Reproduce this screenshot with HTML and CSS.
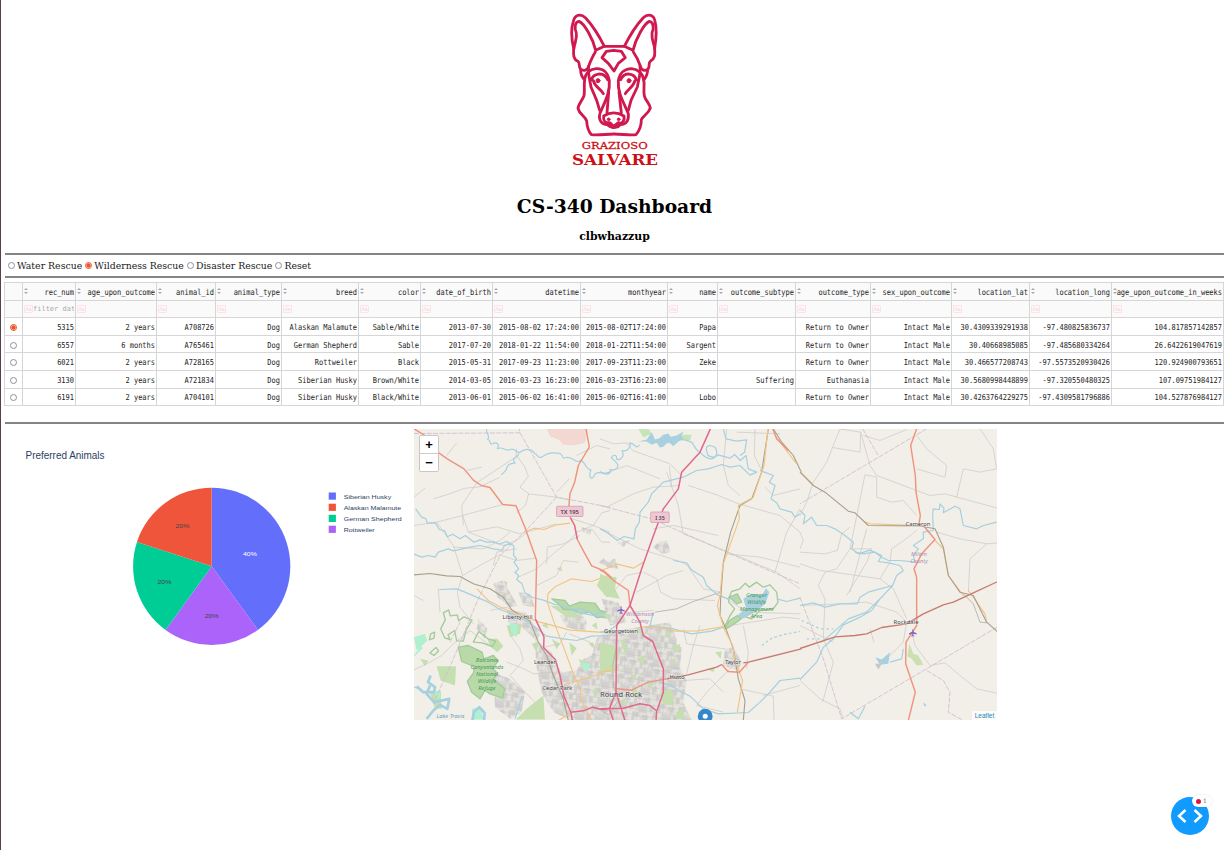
FILE: index.html
```html
<!DOCTYPE html>
<html lang="en">
<head>
<meta charset="utf-8">
<title>CS-340 Dashboard</title>
<link rel="stylesheet" href="styles.css">
</head>
<body>
<main class="page">
  <header class="head">
    <svg class="logo" viewBox="0 0 360 525" role="img" aria-label="Grazioso Salvare">
      <g class="dog">
        <path d="M121 156 C112 170 108 180 101 198 C98 211 86 215 77 207 C69 197 76 189 69 184 C52 176 56 158 56 145 C50 120 47 88 55 64 C59 45 76 39 92 54 C114 78 132 107 148 139 L208 139 C224 107 242 78 264 54 C280 39 297 45 300 64 C307 90 303 120 299 145 C299 158 303 175 286 184 C279 189 286 199 279 207 C270 215 259 211 256 198 C250 180 245 170 235 156"/>
        <path d="M64 99 C57 84 60 65 72 64 C88 70 114 116 122 151 L148 139 M291 99 C298 84 295 65 283 64 C268 70 242 116 234 151 L208 139 M64 99 C67 118 58 130 57 145 M291 99 C289 118 297 130 299 145"/>
        <path d="M141 173 L154 154 L176 151 L199 154 L211 173 L190 190 L177 213 L160 190 Z"/>
        <path d="M77 210 C77 227 82 233 89 239 C86 260 90 272 87 287 C82 301 70 312 69 325 C73 343 89 347 95 363 C96 382 101 395 109 404 C131 407 153 402 177 402 C202 402 222 407 243 404 C254 391 259 379 259 359 C267 344 280 342 286 324 C284 309 270 300 268 287 C264 270 270 253 266 240 C274 232 277 224 278 210"/>
        <path d="M89 239 C91 219 106 207 124 206 C147 205 160 221 163 243 C166 279 147 310 135 340 C129 359 140 375 158 374 C164 385 190 385 195 374 C214 375 222 361 220 341 C208 311 187 279 190 243 C193 221 207 206 230 206 C249 208 265 221 266 240"/>
        <path d="M101 199 C98 223 105 241 108 261 L125 301 L134 331 M255 199 C258 223 250 241 247 261 L228 301 L220 331 M109 240 C114 220 146 213 158 239 M244 240 C239 220 208 213 197 239 M115 242 C120 262 137 266 145 281 M240 242 C235 262 219 266 211 281 M161 276 L156 339 M192 276 L199 339"/>
        <path d="M146 348 Q176 329 207 348 C210 366 199 372 190 368 L176 379 L164 368 C150 370 144 362 146 348Z"/>
        <path d="M166 374 Q176 391 188 374"/>
        <circle class="dot" cx="129" cy="242" r="6"/><circle class="dot" cx="222" cy="242" r="6"/>
        <circle class="dot" cx="161" cy="358" r="4"/><circle class="dot" cx="191" cy="358" r="4"/>
      </g>
      <text class="brand thin" x="80" y="446" font-size="27" textLength="198" lengthAdjust="spacingAndGlyphs">GRAZIOSO</text>
      <text class="brand bold" x="51" y="495" font-size="42" textLength="258" lengthAdjust="spacingAndGlyphs">SALVARE</text>
    </svg>
    <h1>CS-340 Dashboard</h1>
    <h2>clbwhazzup</h2>
  </header>
  <hr class="rule">
  <div class="filters">
    <label><i class="radio"></i>Water Rescue</label>
    <label><i class="radio on"></i>Wilderness Rescue</label>
    <label><i class="radio"></i>Disaster Rescue</label>
    <label><i class="radio"></i>Reset</label>
  </div>
  <hr class="rule">
  <table class="grid">
    <colgroup><col style="width:18px"><col style="width:53px"><col style="width:81px"><col style="width:59px"><col style="width:66px"><col style="width:77px"><col style="width:62px"><col style="width:72px"><col style="width:88px"><col style="width:87px"><col style="width:50px"><col style="width:78px"><col style="width:75px"><col style="width:81px"><col style="width:78px"><col style="width:82px"><col style="width:112px"></colgroup>
    <thead>
      <tr><th></th><th><span>rec_num</span></th><th><span>age_upon_outcome</span></th><th><span>animal_id</span></th><th><span>animal_type</span></th><th><span>breed</span></th><th><span>color</span></th><th><span>date_of_birth</span></th><th><span>datetime</span></th><th><span>monthyear</span></th><th><span>name</span></th><th><span>outcome_subtype</span></th><th><span>outcome_type</span></th><th><span>sex_upon_outcome</span></th><th><span>location_lat</span></th><th><span>location_long</span></th><th><span>age_upon_outcome_in_weeks</span></th></tr>
      <tr class="filter"><td></td><td><div class="f"><b>Aa</b><em>filter data</em></div></td><td><div class="f"><b>Aa</b></div></td><td><div class="f"><b>Aa</b></div></td><td><div class="f"><b>Aa</b></div></td><td><div class="f"><b>Aa</b></div></td><td><div class="f"><b>Aa</b></div></td><td><div class="f"><b>Aa</b></div></td><td><div class="f"><b>Aa</b></div></td><td><div class="f"><b>Aa</b></div></td><td><div class="f"><b>Aa</b></div></td><td><div class="f"><b>Aa</b></div></td><td><div class="f"><b>Aa</b></div></td><td><div class="f"><b>Aa</b></div></td><td><div class="f"><b>Aa</b></div></td><td><div class="f"><b>Aa</b></div></td><td><div class="f"><b>Aa</b></div></td></tr>
    </thead>
    <tbody>
      <tr><td><i class="radio on"></i></td><td><span>5315</span></td><td><span>2 years</span></td><td><span>A708726</span></td><td><span>Dog</span></td><td><span>Alaskan Malamute</span></td><td><span>Sable/White</span></td><td><span>2013-07-30</span></td><td><span>2015-08-02 17:24:00</span></td><td><span>2015-08-02T17:24:00</span></td><td><span>Papa</span></td><td></td><td><span>Return to Owner</span></td><td><span>Intact Male</span></td><td><span>30.4309339291938</span></td><td><span>-97.480825836737</span></td><td><span>104.817857142857</span></td></tr>
      <tr><td><i class="radio"></i></td><td><span>6557</span></td><td><span>6 months</span></td><td><span>A765461</span></td><td><span>Dog</span></td><td><span>German Shepherd</span></td><td><span>Sable</span></td><td><span>2017-07-20</span></td><td><span>2018-01-22 11:54:00</span></td><td><span>2018-01-22T11:54:00</span></td><td><span>Sargent</span></td><td></td><td><span>Return to Owner</span></td><td><span>Intact Male</span></td><td><span>30.40668985085</span></td><td><span>-97.485680334264</span></td><td><span>26.6422619047619</span></td></tr>
      <tr><td><i class="radio"></i></td><td><span>6021</span></td><td><span>2 years</span></td><td><span>A728165</span></td><td><span>Dog</span></td><td><span>Rottweiler</span></td><td><span>Black</span></td><td><span>2015-05-31</span></td><td><span>2017-09-23 11:23:00</span></td><td><span>2017-09-23T11:23:00</span></td><td><span>Zeke</span></td><td></td><td><span>Return to Owner</span></td><td><span>Intact Male</span></td><td><span>30.466577208743</span></td><td><span>-97.5573520930426</span></td><td><span>120.924900793651</span></td></tr>
      <tr><td><i class="radio"></i></td><td><span>3130</span></td><td><span>2 years</span></td><td><span>A721834</span></td><td><span>Dog</span></td><td><span>Siberian Husky</span></td><td><span>Brown/White</span></td><td><span>2014-03-05</span></td><td><span>2016-03-23 16:23:00</span></td><td><span>2016-03-23T16:23:00</span></td><td></td><td><span>Suffering</span></td><td><span>Euthanasia</span></td><td><span>Intact Male</span></td><td><span>30.5680998448899</span></td><td><span>-97.320550480325</span></td><td><span>107.09751984127</span></td></tr>
      <tr><td><i class="radio"></i></td><td><span>6191</span></td><td><span>2 years</span></td><td><span>A704101</span></td><td><span>Dog</span></td><td><span>Siberian Husky</span></td><td><span>Black/White</span></td><td><span>2013-06-01</span></td><td><span>2015-06-02 16:41:00</span></td><td><span>2015-06-02T16:41:00</span></td><td><span>Lobo</span></td><td></td><td><span>Return to Owner</span></td><td><span>Intact Male</span></td><td><span>30.4263764229275</span></td><td><span>-97.4309581796886</span></td><td><span>104.527876984127</span></td></tr>
    </tbody>
  </table>
  <hr class="rule last">
  <section class="visuals">
    <svg class="chart" viewBox="5 428 409 292">
      <text class="title" x="25.5" y="457.5" textLength="79" lengthAdjust="spacingAndGlyphs">Preferred Animals</text>
      <path fill="#636efa" d="M211.7 565.3V486.7A78.6 78.6 0 0 1 257.9 628.9Z"/>
      <path fill="#ab63fa" d="M211.7 565.3L257.9 628.9A78.6 78.6 0 0 1 165.5 628.9Z"/>
      <path fill="#00cc96" d="M211.7 565.3L165.5 628.9A78.6 78.6 0 0 1 136.95 541Z"/>
      <path fill="#ef553b" d="M211.7 565.3L136.95 541A78.6 78.6 0 0 1 211.7 486.7Z"/>
      <g class="pct"><text x="250" y="555.3">40%</text><text x="182.5" y="527.3">20%</text><text x="164.5" y="583.3">20%</text><text x="211.7" y="617.3">20%</text></g>
      <rect x="328.7" y="491.5" width="7.2" height="7.2" fill="#636efa"/><rect x="328.7" y="502.7" width="7.2" height="7.2" fill="#ef553b"/><rect x="328.7" y="513.8" width="7.2" height="7.2" fill="#00cc96"/><rect x="328.7" y="524.7" width="7.2" height="7.2" fill="#ab63fa"/>
      <g class="legend"><text x="343.7" y="497.8" textLength="47.5" lengthAdjust="spacingAndGlyphs">Siberian Husky</text><text x="343.7" y="509" textLength="57.5" lengthAdjust="spacingAndGlyphs">Alaskan Malamute</text><text x="343.7" y="520.2" textLength="58" lengthAdjust="spacingAndGlyphs">German Shepherd</text><text x="343.7" y="531" textLength="31" lengthAdjust="spacingAndGlyphs">Rottweiler</text></g>
    </svg>
    <div class="map">
      <svg class="tiles" viewBox="414 428.5 583 291">
        <defs>
          <pattern id="streets" width="61" height="53" patternUnits="userSpaceOnUse" patternTransform="rotate(9)"><rect width="61" height="53" fill="#e6e3df"/><path d="M0 0H22V14H9V28H0ZM28 6H49V23H33ZM14 31H40V53H18ZM46 30H61V46H50Z" fill="#d3d1d0"/><path d="M38 26H46V34H38ZM2 40H10V50H2Z" fill="#d9e8c8"/><path d="M0 9L25 12L61 9M12 0L16 25L12 53M0 29L33 27L61 29M43 0L40 28L43 53M0 45L61 45M27 12V27M54 29V53" stroke="#c2c0c1" stroke-width="1.500" fill="none"/></pattern>
          <pattern id="hatch" width="7" height="7" patternUnits="userSpaceOnUse" patternTransform="rotate(45)"><rect width="7" height="7" fill="#f3dcd5"/><path d="M0 0V7" stroke="#f2c3bb" stroke-width="2"/></pattern>
        </defs>
        <!-- western third -->
        <g transform="translate(410 425) scale(.33333)">
          <path fill="url(#hatch)" stroke="#f3bdb5" d="M412 10L422 32L448 42L460 56L492 58L524 50L532 10Z"/>
          <g fill="url(#streets)">
            <path d="M376 640L402 665L425 680L440 720L455 740L500 735L520 700L545 690L560 640L585 620L780 590L800 640L790 885H484L430 860L395 800L378 720Z"/>
            <path d="M250 475L278 465L300 500L322 540L300 545L262 515ZM290 555L345 560L390 625L380 645L330 600L295 590ZM205 580L232 610L225 640L200 610ZM248 740L300 760L345 800L335 860L300 880L255 845ZM325 500L360 505L375 545L340 540ZM450 570L510 555L530 590L525 620L470 605ZM565 410L582 398L592 415L610 400L612 420L580 420ZM515 305L545 312L540 328L516 318Z"/>
          </g>
          <g fill="#c5dfb0">
            <path d="M80 722L138 722L135 780L92 765ZM30 700L55 705L45 722ZM350 850L400 810L405 882H318ZM575 450L620 455L612 510L590 515L560 480ZM440 430L454 424L456 438ZM420 540L480 545L515 575L470 575ZM290 600L335 595L330 625L300 635ZM478 650L500 668L485 690ZM572 675L600 660L630 680L612 745L580 730ZM60 800L92 795L95 850L75 850ZM505 700L530 710L520 730ZM280 465L292 470L290 485ZM365 655L385 650L380 680ZM395 600L410 590L415 610ZM425 640L450 655L440 672ZM545 600L560 590L562 612ZM545 800L560 790L565 810ZM535 655L550 650L552 670ZM232 640L262 640L280 662L262 680L240 662Z"/>
          </g>
          <path fill="#aef0d0" d="M12 635L44 625L52 645L20 675ZM12 690L34 660L38 668L14 692ZM298 590L325 600L320 635L304 620ZM515 710L542 715L532 738L518 730ZM70 800L92 796L88 822ZM185 850L214 848L220 882H190Z"/>
          <g class="reserve">
            <path class="filled" d="M145 665L175 660L216 680L222 700L250 690L265 706L248 728L262 744L250 762L284 790L278 818L240 805L225 795L210 820L185 800L172 768L192 740L190 722L155 708Z"/>
            <path d="M100 562L116 553L121 571L142 568L146 586L162 574L186 584L168 615L160 647L140 646L134 615L114 628L120 642L104 637L92 610L106 583ZM206 618L234 640L257 647L247 663L216 652L190 650ZM62 625L74 620L72 638L58 643ZM60 682L78 666L86 676L72 690Z"/>
            <path class="filled" d="M425 520L465 525L478 542L510 530L555 533L570 555L592 560L596 574L560 576L540 560L515 565L490 552L462 552L445 535Z"/>
          </g>
          <g class="minor">
            <path d="M12 300L80 290L158 270L275 238M70 220L110 208L165 188L210 184L270 155M160 300L155 240L200 172L318 94L320 70M320 90L345 125L355 152L330 185L356 205L346 240L320 262M158 270L175 320L260 304L330 325L440 295M80 290L130 360L158 450L142 500L150 545L190 595M130 365L220 370L270 345L300 320M175 320L280 360L320 345L350 322M158 450L210 420L268 388L320 405L378 398M325 455L380 430L435 380L480 345L500 320L550 300L600 320M355 205L440 215L480 225M500 90L560 60L600 70M440 200L478 160M480 278L550 300L575 262L600 255M110 90L140 52M170 135L215 125M12 215L45 188M12 510L40 525M12 733L60 710L95 690L130 655L180 615L240 660M240 555L288 545L318 560L360 580M305 635L330 670L340 705L300 750L345 800L375 830M85 490L90 560M290 710L330 725L372 745L430 740M402 665L450 655L470 620M545 310L575 350L600 350M380 480L440 450L460 405L505 410M410 415L412 365L460 355L510 330M478 625L540 650L590 690M250 420L260 380L320 370M480 810L500 805L500 850L550 852L590 880"/>
          </g>
          <g class="border"><path d="M12 24L330 22L328 10M330 22L440 215L600 245M440 215L345 318L270 390L205 520L130 700L70 835M120 650L150 590"/></g>
          <g class="water">
            <path d="M230 10C226 25 242 28 233 42C245 43 235 60 250 54C260 48 270 58 262 70C280 60 285 80 300 72C318 65 315 85 330 80C350 65 368 73 374 84C385 87 381 100 396 95C412 81 430 80 450 84C460 89 455 103 468 96C490 92 500 118 512 104C525 108 530 135 543 133C534 156 545 170 556 144C572 135 585 150 604 138"/>
            <path d="M327 84C320 102 302 95 315 113C300 113 290 120 289 133L274 148M17 250L35 275L48 280L52 293L76 292L88 312L104 316L112 334L128 326L150 340L166 330L192 350L210 343L230 350L252 349L268 356L290 348L311 361L311 390L320 400L312 410L326 430L315 441L326 450L320 462L336 475L345 502L368 516L400 524L430 535L470 545L500 560L590 578"/>
            <path d="M12 386L35 395L55 390L75 395L85 380L115 370L130 376L180 365L210 360L250 370L277 374L283 360L305 355M88 492L140 490L165 500L200 515L235 530L270 552L320 570L370 600L410 632L460 640L500 645L545 632L600 630"/>
            <path class="wide" d="M62 750L54 770L75 785L72 800L40 800L20 782M60 780L50 805L72 830L118 820L112 850L90 838L70 855L50 880M187 885L192 858L208 845L224 862L222 885"/>
            <path d="M336 815L325 850L315 880M12 785L30 790"/>
            <path d="M480 555L510 548L550 565L585 560"/>
          </g>
          <path class="rail" d="M12 448L60 444L110 451L150 453L190 475L240 490L280 515L305 553L360 587L385 650L410 690L430 750L460 820L475 885"/>
          <path class="sec" d="M201 490L236 526L275 547L335 571L390 590L480 614L600 622M347 318L372 308L402 312L440 298L480 293M600 448L545 468L485 460L438 482L414 504L412 530L432 590L455 650L492 750L512 790L512 820L545 885M462 778L540 755L600 735M445 885L485 862"/>
          <path class="prim" d="M12 10L45 30M78 76L112 100L162 130L190 164L214 180L240 186L278 237L318 241L345 306L380 405L376 580M528 10L538 64L505 120L494 170L480 205L476 250L482 280M502 342L525 385L545 421L580 435L604 456"/>
          <path class="trunk" d="M376 580L402 634L401 667L436 702L450 750L462 812L483 862L487 885M482 278L494 300L502 342M481 860L520 856L548 845L575 852L604 848"/>
        </g>
        <!-- centre third -->
        <g transform="translate(600 425) scale(.33333)">
          <path fill="url(#streets)" d="M160 645L200 650L245 665L240 725L260 765L250 830L275 884H160V800ZM175 350L200 345L212 378L190 388L160 365ZM375 670L400 665L425 710L415 735L368 720ZM52 350L90 345L70 365ZM10 402L30 410L45 398L55 430L20 425ZM5 520L55 530L80 590L30 600Z"/>
          <g fill="#c5dfb0"><path d="M0 650L42 660L40 700L15 745L0 738ZM195 615L215 625L205 640ZM180 800L215 790L222 840L190 835ZM218 660L240 656L238 678L220 675ZM60 640L84 660L76 690ZM110 700L135 690L130 720ZM0 445L30 460L60 520L30 515L0 490ZM320 730L345 725L340 740ZM95 800L110 790L110 820ZM345 680L365 678L362 700ZM108 610L128 608L125 630ZM90 750L110 745L105 765ZM60 825L76 820L78 845ZM210 700L225 700L222 720ZM140 780L155 772L158 792ZM228 860L250 850L255 880H230ZM10 570L30 565L28 585Z"/></g>
          <path fill="#c6e5b4" d="M115 10H145L155 24L130 36ZM240 28H275L270 45H245Z"/>
          <path fill="#a9d0df" d="M115 48L140 42L155 20L165 42L178 38L190 28L205 24L212 34L230 30L252 17L244 30L250 42L235 48L220 62L208 52L200 54L190 64L180 66L170 52L155 58L140 48Z"/>
          <g class="reserve"><path d="M386 518L395 498L420 490L436 473L448 485L470 470L490 485L510 478L530 500L534 530L520 550L480 555L455 580L425 570L410 585L374 604L390 570L404 550L386 530Z"/>
          <path class="filled" d="M374 610L388 585L412 570L424 580L402 596L382 608ZM388 515L412 505L425 530L410 535Z"/></g>
          <path fill="#a9d0df" d="M430 520L455 505L485 510L498 488L508 500L496 535L465 560L428 580L412 570L438 548Z"/>
          <g class="minor"><path d="M0 40L40 55L80 52L98 75L210 115L245 150M0 310L60 340L120 370L240 408L262 420L310 490L365 500M200 140L235 240L250 325L385 380L530 440L600 490M265 180L350 208L415 235L540 270L600 320M240 180L160 185L100 205L20 245M208 120L215 185M380 10L370 120L385 180L420 210M465 10L463 90L485 135M495 185L520 210L600 190M600 250L560 320L525 440M355 330L220 300L160 310M130 440L170 460L182 500L220 520L345 525M250 435L200 450L110 500M40 500L80 450L125 440M100 560L160 555M380 385L480 395L600 425M365 510L440 560L600 565M390 600L550 575L600 580M430 600L445 680L440 730M405 715L320 800L290 840L370 860M260 745L280 660L300 600M490 810L600 780M420 790L520 812L522 885M375 670L260 655L250 610M240 730L150 720L80 790M25 140L80 120L180 160M250 765L330 760L370 800M410 20L540 25"/></g>
          <path class="border" d="M0 240L155 280L245 320L380 380L600 475"/>
          <g class="water"><path d="M0 138C18 152 36 145 30 132C45 137 60 125 50 112L34 96C40 85 52 88 50 102C65 105 74 90 66 75C84 81 95 60 88 52C112 55 102 73 119 58M250 42L275 50L290 73L315 94L330 100C350 100 355 81 345 65C325 55 313 62 322 82C318 93 345 100 354 88L390 98L404 87L421 105L438 90L445 130L470 140L450 149L420 120L390 125L365 117L325 130L290 135L250 155L190 170L155 205L145 230L120 260L118 290L106 310L102 340L72 333L52 345L22 322L0 310"/>
          <path d="M370 10L378 40L410 47L440 43L434 80L420 90M480 135L520 150L508 170L525 180L513 220L530 232L540 250L575 260L585 275L600 265M220 405L260 412L274 433L310 455L320 480L355 510L385 520L410 518M530 520L560 528L600 518M160 560L150 600L220 610L275 625L335 617L370 605M180 770L220 785L270 812L310 850L355 865L445 861L480 830L510 800L540 765L600 758M0 620L28 615L48 600"/>
          <path stroke-dasharray="8 7" d="M486 660L515 638L555 626L600 618"/></g>
          <path class="rail" d="M505 10L485 140L455 220L420 240L392 320L370 410L362 520L360 570L378 610L400 670L415 760L435 825L430 885M520 10L545 50L580 90L604 140"/>
          <path class="rail pale" d="M50 660L38 720L40 780L50 810M55 825L25 870L0 850M165 560L230 550L280 528L362 500"/>
          <path class="sec" d="M504 10L492 120L460 215L415 240L418 280L386 370L368 420L360 510L352 540L372 610L398 660L405 705L428 765L412 860M0 435L22 428L52 416L100 428L130 410M130 605L175 605L225 617L295 616L370 603M0 740L45 733M525 30L590 115"/>
          <path class="prim" d="M0 434L10 438L45 468L85 495L90 540M50 790L95 794L145 770L200 760M365 717L384 738L418 740L445 710M518 10L530 40L565 75"/>
          <path class="pbrown" d="M200 760L265 748L350 725L365 717M430 712L445 710L604 670"/>
          <path class="trunk i35" d="M331 10L300 80L245 140L235 190L190 250L155 345L125 430L90 540L50 600L48 800L75 885M90 540L120 590L130 630L158 648L190 730L190 800L170 858L168 885M0 850L70 848L120 835L150 840L172 858M50 795L28 850L40 885"/>
        </g>
        <!-- eastern third -->
        <g transform="translate(800 425) scale(.33333)">
          <g class="minor"><path d="M120 10L80 110L40 170L20 230L0 270M120 10L182 20L210 120L230 150L390 210L435 205L600 250M195 148L150 370L110 430L75 440L55 480L75 520L70 640L100 710L68 830M195 148L230 155L230 215L275 230L310 225L350 270M182 20L180 80L98 66M190 30L240 45L320 12M350 30L380 70L440 120L435 155L350 130M540 10L580 70L590 130L540 140L490 130L470 215M410 320L480 340L560 355L510 400L505 500M560 355L600 352M0 320L10 345L0 370M0 380L75 385L112 375L125 325L150 305M150 370L215 370L200 410L140 510M0 415L60 435L100 440L240 460L280 490L320 580M350 315L305 350L275 370L270 410L240 460M0 540L120 535L200 530L290 560L320 590M320 590L310 650L270 690M335 620L345 660L390 720L435 712L480 750L530 790L600 805M0 765L60 820L120 850L130 880M0 600L100 650M210 610L222 650M200 310L150 500"/></g>
          <path class="border" d="M380 10L0 235M188 10L236 92M0 515L70 700L125 880L600 600"/>
          <path class="border" d="M380 735L430 765L450 800L445 860L490 885"/>
          <g class="water"><path d="M0 255L15 270L10 295L35 275L50 300L80 300L105 310L135 330L160 350L155 370L175 385L210 374L245 390L235 408L265 412L300 420L310 435L290 450L278 480L240 490L205 500L180 515L172 535L120 535L75 545L40 532L0 540"/>
          <path d="M165 380L190 385L225 380L245 395L265 405L300 405L345 410L340 390L355 370L340 360L370 340L370 320L400 315L398 265L400 250L418 252L420 235L432 248L430 262L465 242L480 250L490 300L530 310L550 300L590 290M278 480L240 520L215 555L180 575L130 598L100 640L70 665L50 710L0 762M250 510L200 560L145 580L100 620L65 650M310 670L305 700L270 710M150 860L175 880L195 842"/>
          <path stroke-dasharray="7 9" d="M5 585L60 610L100 610M20 640L60 640"/></g>
          <path fill="#a9d0df" d="M226 695L245 702L270 680L265 715L240 718ZM370 830L380 840L372 842Z"/><path fill="#c8c8c8" d="M225 715L245 715L235 733Z"/><path fill="#cbe0b0" d="M328 655L340 685L355 690L370 718L350 720L335 700L322 692Z"/>
          <path class="sec" d="M0 138L40 178M190 288L212 295L360 300M405 345L430 370L445 450L490 510M505 495L555 565L560 590M120 10H138"/>
          <path class="rail" d="M0 140L40 180L75 200L145 257L165 262L205 300L355 301L405 310L430 365L445 450L480 500L520 510L560 590L600 625"/>
          <path class="rail pale" d="M490 505L520 535L540 590L565 592"/>
          <path class="prim" d="M350 10L332 60L346 150L348 200L361 270L356 300M370 300L405 342L365 385L342 430L350 455L350 600L318 650L317 715L346 800L325 885"/>
          <path class="pbrown" d="M0 669L105 634L165 630L200 625L245 606L320 595L370 565L430 538L460 530L520 502L600 465"/>
        </g>
        <g class="shields"><rect x="556.5" y="505.8" width="26.5" height="10.2" rx="1"/><rect x="650.7" y="511.5" width="18.5" height="10.5" rx="1"/><text x="569.7" y="513.4" textLength="18.5" lengthAdjust="spacingAndGlyphs">TX 195</text><text x="660" y="519.4" textLength="9.5" lengthAdjust="spacingAndGlyphs">I 35</text></g>
        <g class="places">
          <text x="517.5" y="618.7" textLength="30">Liberty Hill</text><text x="545" y="663.6" textLength="22">Leander</text><text x="557.3" y="689.2" textLength="30">Cedar Park</text><text x="621" y="632.2" textLength="34">Georgetown</text><text x="677" y="678.7" textLength="15">Hutto</text><text x="733" y="663.8" textLength="16">Taylor</text><text x="918" y="525.2" textLength="25">Cameron</text><text x="906" y="623.3" textLength="25">Rockdale</text><text class="city" x="621" y="696.2" textLength="42" lengthAdjust="spacingAndGlyphs">Round Rock</text>
        </g>
        <g class="nature"><text x="487" y="661.2">Balcones</text><text x="487" y="668.2">Canyonlands</text><text x="487" y="675.2">National</text><text x="487" y="682.2">Wildlife</text><text x="487" y="689.2">Refuge</text><text x="756.5" y="596.7">Granger</text><text x="756.5" y="603.5">Wildlife</text><text x="756.5" y="610.4">Management</text><text x="756.5" y="617.4">Area</text></g>
        <g class="county"><text x="640" y="615.5">Williamson</text><text x="640" y="622.5">County</text><text x="919" y="555.8">Milam</text><text x="919" y="562.7">County</text></g>
        <text class="lake" x="450.5" y="717" textLength="28">Lake Travis</text>
        <g fill="#8461c4"><path id="plane" d="M620.500 606h1.100v2.400l3.200 1.500v1.100l-3.200-.7v1.500l1 .8v.6l-1.600-.3-1.600.3v-.6l1.100-.8v-1.500l-3.300.7v-1.100l3.300-1.500z"/><use href="#plane" x="291.8" y="22.9"/></g>
        <circle cx="705.2" cy="715.7" r="7.4" fill="#3388cb"/><circle cx="705.2" cy="715.7" r="2.500" fill="#fff"/>
      </svg>
      <div class="zoom"><button>+</button><button>−</button></div>
      <a class="credit">Leaflet</a>
    </div>
  </section>
  <div class="debug"><svg viewBox="0 0 38 38"><path d="M14.500 13L8 19l6.500 6M23.500 13l6.500 6-6.500 6" fill="none" stroke="#fff" stroke-width="2.500"/></svg><span class="count"><i></i>1</span></div>
</main>
</body>
</html>
```
FILE: styles.css
```css
* { box-sizing: border-box; }
body { margin: 0; background: #fff; color: #111; font-family: "DejaVu Serif", serif; overflow: hidden; }
.page { position: relative; height: 850px; border-left: 1px solid #54414e; padding: 0 1px 0 4px; }
.head { display: flex; flex-direction: column; align-items: center; height: 253px; }
.logo { width: 120px; height: 175px; flex: none; }
.dog { fill: none; stroke: #d0194f; stroke-width: 8.500; stroke-linejoin: round; stroke-linecap: round; }
.dog .dot { fill: #d0194f; stroke-width: 3; }
.brand { fill: #cc1018; font-family: "DejaVu Serif", serif; }
.brand.thin { stroke: #cc1018; stroke-width: .8; }
.brand.bold { font-weight: bold; }
h1 { margin: 18px 0 0; font-size: 18.700px; line-height: 26px; }
h2 { margin: 11px 0 0; font-size: 10.900px; line-height: 14px; }
h1, h2 { color: #000; }
.rule { height: 2px; margin: 0; border: 0; background: #858585; }
.rule:first-of-type { margin-top: 0; }
.filters { display: flex; align-items: center; gap: 3px; height: 21px; padding: 0 0 0 3px; font-size: 9.350px; color: #222; }
.filters label { display: flex; align-items: center; gap: 2px; }
.radio { display: block; flex: none; width: 7px; height: 7px; border: 1px solid #8f8f9d; border-radius: 50%; background: #fff; }
.radio.on { border-color: #e9562b; background: radial-gradient(circle, #e9562b 0 1.800px, #fff 2.500px); }
.grid { width: 1219px; margin: 4px 0 0 -1px; border-collapse: collapse; table-layout: fixed; font: 7px/8px "DejaVu Sans Mono", monospace; color: #222; }
.grid th, .grid td { height: 17.600px; padding: 1px 1px 0 2px; border: 1px solid #d6d6d6; text-align: right; font-weight: normal; white-space: nowrap; overflow: hidden; }
.grid span { display: inline-block; transform: translateY(.5px) scaleY(1.18); }
.grid th, .grid .filter td { background: #fafafa; }
.grid th { position: relative; overflow: visible; }
.grid th + th::before, .grid th + th::after { content: ""; position: absolute; left: 1px; width: 0; height: 0; border: 2px solid transparent; }
.grid th + th::before { top: 3px; border-bottom: 2.500px solid #aaa; }
.grid th + th::after { top: 9px; border-top: 2.500px solid #aaa; }
.grid td .radio { margin: 1px 0 0 3px; }
.grid .filter td { padding-left: 1px; }
.f { display: flex; align-items: center; height: 10px; overflow: hidden; }
.f b { flex: none; width: 9px; height: 8px; border: 1px solid #fde3e6; border-radius: 1px; font: 5px/6px "Liberation Sans", sans-serif; color: #fbd3d8; text-align: center; }
.f em { font-style: normal; color: #aaa; }
.rule.last { margin-top: 16px; }
.visuals { display: flex; padding-top: 4.500px; }
.chart { width: 409px; height: 292px; flex: none; }
.chart text { font-family: "Liberation Sans", sans-serif; fill: #2a3f5f; }
.chart .title { font-size: 10px; }
.chart .pct text { font-size: 6.200px; text-anchor: middle; fill: #444; transform-box: fill-box; transform-origin: center; transform: scaleX(1.130); }
.chart .pct text:first-child { fill: #fff; }
.chart .legend text { font-size: 6.200px; }
.map { position: relative; width: 583px; height: 291px; background: #f2efe9; overflow: hidden; }
.tiles { display: block; width: 583px; height: 291px; }
.tiles path { stroke-linejoin: round; }
.minor { fill: none; stroke: #c9c6c4; stroke-width: 2; }
.border { fill: none; stroke: #cdbccb; stroke-width: 2.500; stroke-dasharray: 15 4; }
.water { fill: none; stroke: #a5d0df; stroke-width: 3.600; }
.water .wide { stroke-width: 8; }
.rail { fill: none; stroke: #a89f8c; stroke-width: 3.300; }
.rail.pale { stroke: #b8b5b2; stroke-width: 2.800; }
.sec { fill: none; stroke: #f2c483; stroke-width: 3.400; }
.prim { fill: none; stroke: #f0937d; stroke-width: 4.300; }
.pbrown { fill: none; stroke: #c77b70; stroke-width: 4; }
.trunk { fill: none; stroke: #e0688b; stroke-width: 4.500; }
.reserve { fill: none; stroke: #a3ca9b; stroke-width: 4; }
.reserve .filled { fill: #b9d9a9; }
.tiles text { font-family: "Noto Sans", sans-serif; text-anchor: middle; }
.shields rect { fill: #eec9d3; stroke: #d69caf; stroke-width: .8; }
.shields text { font-size: 5.800px; font-weight: 600; fill: #533c48; }
.places text { font-size: 5.900px; fill: #3d3d3d; stroke: #fff; stroke-width: .8px; stroke-opacity: .55; paint-order: stroke; }
.places .city { font-size: 7.500px; }
.nature text { font-size: 5.700px; font-style: italic; fill: #479a58; }
.county text { font-size: 5.700px; font-style: italic; fill: #b18db3; }
.lake { font-size: 5.700px; font-style: italic; fill: #679dbd; }
.zoom { position: absolute; left: 5px; top: 6px; width: 20px; border: 1px solid #c9c7c4; border-radius: 2px; overflow: hidden; }
.zoom button { display: block; width: 18px; height: 17.500px; padding: 0; border: 0; background: #fff; color: #000; font: bold 13px/17px "Liberation Sans", sans-serif; }
.zoom button + button { border-top: 1px solid #ccc; }
.credit { position: absolute; right: 0; bottom: 0; width: 25px; height: 9px; background: rgba(255,255,255,.75); color: #2385b5; font: 6.500px/9px "Liberation Sans", sans-serif; text-align: center; }
.debug { position: absolute; left: 1169.500px; top: 797px; width: 38px; height: 38px; border-radius: 50%; background: #129bff; }
.debug svg { display: block; width: 38px; height: 38px; }
.count { position: absolute; left: 21px; top: -2px; display: flex; align-items: center; justify-content: center; gap: 2px; width: 20px; height: 12px; border-radius: 6px; background: #fff; box-shadow: 0 0 2px rgba(0,0,0,.15); font: 6px/12px "DejaVu Serif", serif; color: #666; }
.count i { width: 5px; height: 5px; border-radius: 50%; background: #dc1738; }
```
